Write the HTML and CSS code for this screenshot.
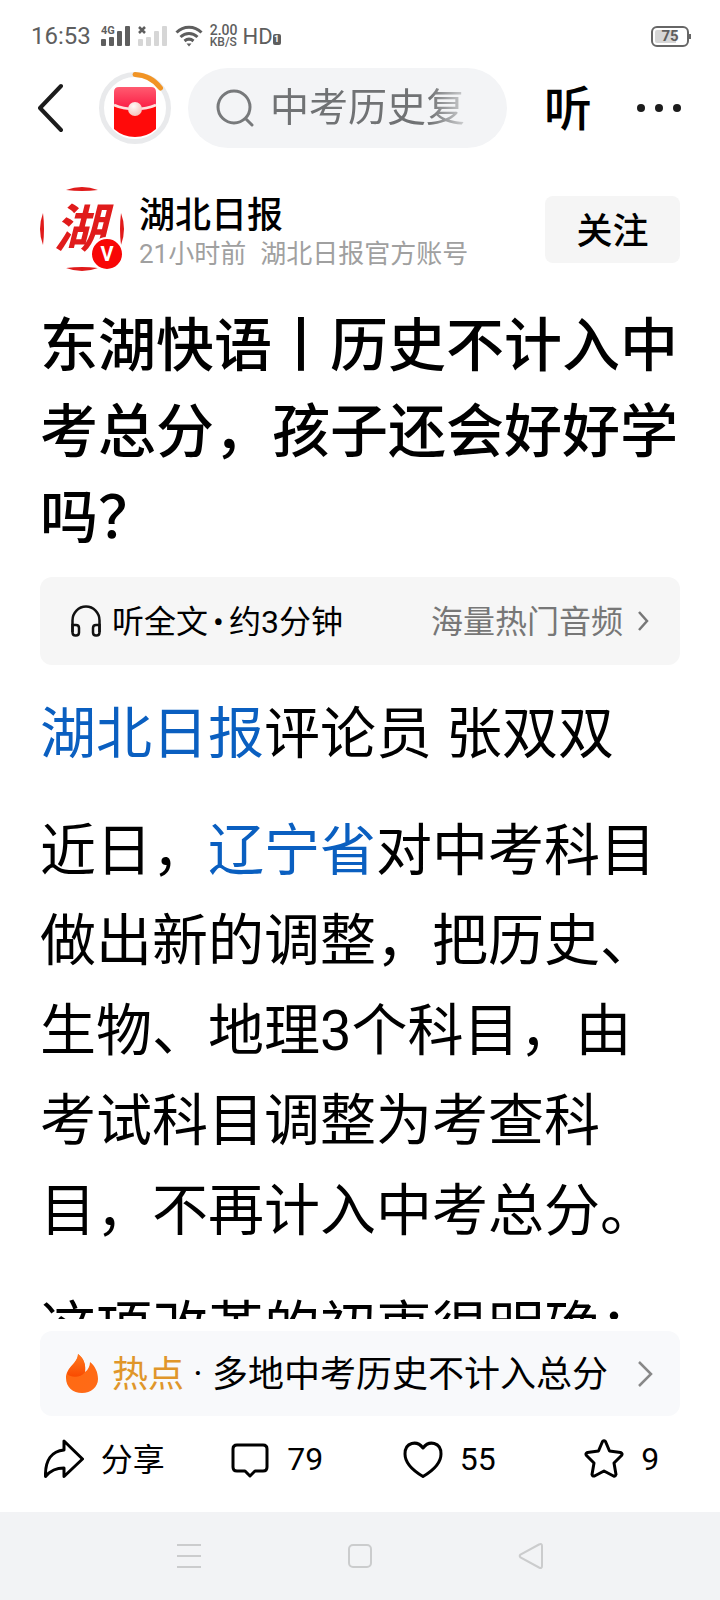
FILE: index.html
```html
<!DOCTYPE html>
<html lang="zh-CN">
<head>
    <meta charset="UTF-8">
    <meta name="viewport" content="width=device-width, initial-scale=1.0">
    <title>东湖快语丨历史不计入中考总分，孩子还会好好学吗？</title>
    <link rel="stylesheet" href="styles.css">
</head>
<body>
    <div class="status-bar">
        <span class="time">16:53</span>
        <svg class="signal" width="66" height="22" viewBox="0 0 66 22" fill="#5e5e5e">
            <text x="0" y="9" class="net">4G</text>
            <rect x="0" y="14" width="5" height="7" rx="1"/>
            <rect x="8" y="12" width="5" height="9" rx="1"/>
            <rect x="16" y="6" width="5" height="15" rx="1"/>
            <rect x="24" y="1" width="5" height="20" rx="1"/>
            <g fill="#d6d6d6">
                <rect x="37" y="14" width="5" height="7" rx="1"/>
                <rect x="45" y="12" width="5" height="9" rx="1"/>
                <rect x="53" y="6" width="5" height="15" rx="1"/>
                <rect x="61" y="1" width="5" height="20" rx="1"/>
            </g>
            <path d="M38 2l6 6M44 2l-6 6" stroke="#5e5e5e" stroke-width="2.5"/>
        </svg>
        <svg class="wifi" width="28" height="22" viewBox="0 0 28 22" fill="none" stroke="#5e5e5e" stroke-width="3">
            <path d="M1.500 7.500C8.500 .5 19.500 .5 26.500 7.500M5.500 12c5-4.600 12-4.600 17 0M9.500 16c3-2.500 6-2.500 9 0"/>
            <path d="M11.500 18.500h5L14 21.500z" fill="#5e5e5e" stroke="none"/>
        </svg>
        <span class="speed"><b>2.00</b><span>KB/S</span></span>
        <span class="hd">HD</span>
        <span class="sim">1</span>
        <span class="battery">75</span>
    </div>

    <header class="top-bar">
        <button class="icon-button" aria-label="返回">
            <svg width="26" height="50" viewBox="0 0 26 50" fill="none" stroke="#1c1c1c" stroke-width="4" stroke-linecap="round" stroke-linejoin="round">
                <path d="M24 3L3 25l21 22"/>
            </svg>
        </button>
        <button class="icon-button packet" aria-label="红包">
            <svg width="72" height="72" viewBox="0 0 72 72">
                <defs>
                    <linearGradient id="packet-flap" x1="0" y1="0" x2="0" y2="1">
                        <stop offset="0" stop-color="#ff5b70"/>
                        <stop offset="1" stop-color="#fb1540"/>
                    </linearGradient>
                    <radialGradient id="packet-pearl" cx=".4" cy=".3" r=".8">
                        <stop offset="0" stop-color="#fffaf8"/>
                        <stop offset="1" stop-color="#f4bcb4"/>
                    </radialGradient>
                </defs>
                <circle cx="36" cy="36" r="33.5" fill="#fff" stroke="#e9eaec" stroke-width="5"/>
                <path d="M36 2.500A33.500 33.500 0 0 1 61.500 16" fill="none" stroke="#f19425" stroke-width="5" stroke-linecap="round"/>
                <path d="M15 33h42v24q-9 8-21 8t-21-8z" fill="#ff0a0a"/>
                <path d="M15 20q0-5 5-5h32q5 0 5 5v14q-9 5-21 5t-21-5z" fill="url(#packet-flap)"/>
                <path d="M15 33q9 4 21 4t21-4" fill="none" stroke="#ffe0dc" stroke-width="3"/>
                <circle cx="36" cy="37" r="7" fill="url(#packet-pearl)"/>
            </svg>
        </button>
        <label class="search">
            <svg width="38" height="38" viewBox="0 0 38 38" fill="none" stroke="#77797b" stroke-width="3" stroke-linecap="round">
                <circle cx="18" cy="18" r="16"/>
                <path d="M30 30l6 6"/>
            </svg>
            <input type="text" placeholder="中考历史复" aria-label="搜索">
        </label>
        <button class="icon-button listen">听</button>
        <button class="icon-button" aria-label="更多">
            <svg width="46" height="10" viewBox="0 0 46 10" fill="#1c1c1c">
                <circle cx="5" cy="5" r="4"/>
                <circle cx="23" cy="5" r="4"/>
                <circle cx="41" cy="5" r="4"/>
            </svg>
        </button>
    </header>

    <main class="article">
        <div class="author">
            <div class="avatar">
                <svg width="84" height="84" viewBox="0 0 84 84" fill="#e01b1b">
                    <path d="M26 3Q42-3 58 3Q42 5 26 3zM26 81Q42 87 58 81Q42 79 26 81zM3 26Q-3 42 3 58Q5 42 3 26zM81 26Q87 42 81 58Q79 42 81 26z"/>
                    <text x="14" y="60" class="brand">湖</text>
                </svg>
                <span class="badge">V</span>
            </div>
            <div class="author-info">
                <a href="#" class="author-name">湖北日报</a>
                <div class="author-meta"><span>21小时前</span><span>湖北日报官方账号</span></div>
            </div>
            <button class="follow">关注</button>
        </div>

        <h1>东湖快语丨历史不计入中考总分，孩子还会好好学吗？</h1>

        <div class="audio-bar">
            <svg width="30" height="32" viewBox="0 0 30 32" fill="none" stroke="#111" stroke-width="2.5">
                <path d="M1.500 27V15.500a13.500 14 0 0 1 27 0V27"/>
                <path d="M1.500 20h3.500q3 0 3 3v4.500q0 3-3 3h-.5q-3 0-3-3zM28.500 20H25q-3 0-3 3v4.500q0 3 3 3h.5q3 0 3-3z"/>
            </svg>
            <span class="audio-title">听全文<span class="dot">•</span>约3分钟</span>
            <a href="#" class="audio-more"><span>海量热门音频</span>
                <svg width="12" height="20" viewBox="0 0 12 20" fill="none" stroke="#777" stroke-width="2.5">
                    <path d="M2 1l8 9-8 9"/>
                </svg>
            </a>
        </div>

        <p><a href="#">湖北日报</a>评论员 张双双</p>
        <p>近日，<a href="#">辽宁省</a>对中考科目做出新的调整，把历史、生物、地理3个科目，由考试科目调整为考查科目，不再计入中考总分。</p>
        <p>这项改革的初衷很明确：</p>
    </main>

    <footer class="footer">
        <a href="#" class="hot-bar">
            <svg width="32" height="40" viewBox="0 0 32 40">
                <defs>
                    <linearGradient id="flame" x1="0" y1="0" x2="1" y2="1">
                        <stop offset="0" stop-color="#ff6a10"/>
                        <stop offset="1" stop-color="#ff6a18"/>
                    </linearGradient>
                    <linearGradient id="flame-tip" x1="0" y1="0" x2="0" y2="1">
                        <stop offset="0" stop-color="#ff7a20"/>
                        <stop offset="1" stop-color="#f94a00"/>
                    </linearGradient>
                </defs>
                <path d="M12 0c0 9-12 13-12 24 0 9 7 15 16 15s16-6 16-14c0-7-3-13-8-17 0 4-2 8-5 10C20 11 18 4 12 0z" fill="url(#flame)"/>
                <path d="M1 20c4 4 14 4 18-2 1-7-1-13-7-18 0 9-9 12-11 20z" fill="url(#flame-tip)"/>
            </svg>
            <span class="hot-label">热点</span>
            <span class="hot-dot">·</span>
            <span class="hot-text">多地中考历史不计入总分</span>
            <svg class="arrow" width="15" height="26" viewBox="0 0 15 26" fill="none" stroke="#888" stroke-width="2.5">
                <path d="M1 1l12 12L1 25"/>
            </svg>
        </a>
        <div class="actions">
            <button class="action share">
                <svg width="40" height="40" viewBox="0 0 40 40">
                    <path d="M20 2v9C8 12 1 21 1.500 37.500 7 31 12 29 20 29v8.500L38.500 20z"/>
                </svg>
                <span>分享</span>
            </button>
            <button class="action">
                <svg width="40" height="40" viewBox="0 0 40 40">
                    <path d="M7 6h26q4 0 4 4v18q0 4-4 4h-8l-5 5-5-5H7q-4 0-4-4V10q0-4 4-4z"/>
                </svg>
                <span>79</span>
            </button>
            <button class="action">
                <svg width="40" height="40" viewBox="0 0 40 40">
                    <path d="M20 37.500C9 31 2 24 2 15 2 3 14 1 20 9 26 1 38 3 38 15c0 9-7 16-18 22.500z"/>
                </svg>
                <span>55</span>
            </button>
            <button class="action">
                <svg width="40" height="40" viewBox="0 0 40 40">
                    <path d="M18.500 2.500q1.500-1.500 3 0l4 9.500 11 1.500q2.500 1 1 3L30 24l2 11.500q-.5 2-2.500 1.500L20 32l-9.500 5Q8.500 37.500 8 35.500L10 24l-7.500-7.500q-1.500-2 1-3l11-1.500z"/>
                </svg>
                <span>9</span>
            </button>
        </div>
    </footer>

    <nav class="nav-bar">
        <button class="icon-button" aria-label="最近任务">
            <svg width="26" height="26" viewBox="0 0 26 26"><path d="M1 2h24M1 13h24M1 24h24"/></svg>
        </button>
        <button class="icon-button" aria-label="主屏幕">
            <svg width="26" height="26" viewBox="0 0 26 26"><rect x="2" y="2" width="22" height="22" rx="4"/></svg>
        </button>
        <button class="icon-button" aria-label="后退">
            <svg width="26" height="26" viewBox="0 0 26 26"><path d="M21 1.500q3-1.500 3 1.500v20q0 3-3 1.500L2.500 14.500q-1.500-1.500 0-3z"/></svg>
        </button>
    </nav>
</body>
</html>
```
FILE: styles.css
```css
* {
    box-sizing: border-box;
}
body {
    margin: 0;
    height: 100vh;
    display: flex;
    flex-direction: column;
    background-color: #fff;
    color: #000;
    font-family: Roboto, "Noto Sans CJK SC", sans-serif;
}
a {
    color: inherit;
    text-decoration: none;
}
button {
    font-family: inherit;
    color: inherit;
    border: none;
    padding: 0;
    background: none;
    cursor: pointer;
}
svg {
    display: block;
    flex-shrink: 0;
}

/* status bar */
.status-bar {
    display: flex;
    align-items: center;
    flex-shrink: 0;
    height: 68px;
    padding: 4px 31px 0;
    color: #5e5e5e;
}
.time {
    font-size: 24px;
}
.signal {
    margin-left: 10px;
}
.net {
    font-size: 11px;
    font-weight: 700;
}
.wifi {
    margin-left: 8px;
}
.speed {
    display: flex;
    flex-direction: column;
    margin-left: 7px;
    font-size: 12px;
    font-weight: 500;
    line-height: 12px;
}
.speed b {
    font-size: 14px;
    font-weight: 500;
}
.hd {
    margin-left: 5px;
    font-size: 22px;
}
.sim {
    margin-top: 7px;
    width: 8px;
    border-radius: 2px;
    background-color: #5e5e5e;
    color: #fff;
    font-size: 9px;
    font-weight: 700;
    line-height: 11px;
    text-align: center;
}
.battery {
    position: relative;
    margin-left: auto;
    width: 38px;
    height: 21px;
    border: 2px solid #666;
    border-radius: 6px;
    background: linear-gradient(90deg, #d6d6d6 70%, #fff 70%) content-box;
    padding: 2px;
    font-size: 15px;
    font-weight: 700;
    line-height: 13px;
    text-align: center;
}
.battery::after {
    content: "";
    position: absolute;
    right: -4px;
    top: 6px;
    width: 2px;
    height: 5px;
    background-color: #666;
}

/* top bar */
.top-bar {
    display: flex;
    align-items: center;
    flex-shrink: 0;
    padding: 0 38px 0 37px;
}
.packet {
    margin: 0 17px 0 36px;
}
.search {
    display: flex;
    align-items: center;
    flex: 1;
    min-width: 0;
    height: 80px;
    padding: 0 38px 0 28px;
    gap: 16px;
    border-radius: 40px;
    background-color: #f3f4f6;
}
.search input {
    flex: 1;
    min-width: 0;
    padding: 0;
    border: none;
    outline: none;
    background: none;
    font-family: inherit;
    font-size: 39px;
    -webkit-mask-image: linear-gradient(90deg, #000 80%, transparent 105%);
    mask-image: linear-gradient(90deg, #000 80%, transparent 105%);
}
.search input::placeholder {
    color: #707274;
}
.listen {
    margin: 0 44px 0 37px;
    padding-top: 4px;
    font-size: 48px;
    font-weight: 500;
    line-height: 68px;
}

/* article */
.article {
    flex: 1;
    min-height: 0;
    overflow: hidden;
    padding: 39px 40px 0;
}
.author {
    display: flex;
    align-items: center;
}
.avatar {
    position: relative;
    margin-right: 15px;
}
.brand {
    font-size: 52px;
    font-weight: 700;
    font-style: italic;
}
.badge {
    position: absolute;
    right: 0;
    bottom: 0;
    width: 34px;
    height: 34px;
    border: 2px solid #fff;
    border-radius: 50%;
    background-color: #f80606;
    color: #fff;
    font-size: 20px;
    font-weight: 700;
    line-height: 30px;
    text-align: center;
}
.author-info {
    flex: 1;
    padding-top: 8px;
}
.author-name {
    display: block;
    font-size: 36px;
    font-weight: 500;
    line-height: 42px;
}
.author-meta {
    display: flex;
    gap: 14px;
    color: #a0a0a0;
    font-size: 26px;
    line-height: 34px;
}
.follow {
    width: 135px;
    height: 67px;
    padding-bottom: 2px;
    border-radius: 8px;
    background-color: #f5f5f5;
    font-size: 36px;
    font-weight: 500;
}
h1 {
    margin: 0;
    padding: 32px 0 16px;
    font-size: 58px;
    font-weight: 500;
    line-height: 86px;
}
.audio-bar {
    display: flex;
    align-items: center;
    height: 88px;
    margin-bottom: 24px;
    padding: 0 31px;
    border-radius: 12px;
    background-color: #f6f6f6;
    font-size: 32px;
}
.audio-title {
    margin-left: 11px;
    padding-bottom: 5px;
}
.dot {
    display: inline-block;
    width: 21px;
    text-align: center;
}
.audio-more {
    display: flex;
    align-items: center;
    gap: 14px;
    margin-left: auto;
    color: #777;
}
.audio-more span {
    padding-bottom: 5px;
}
.article p {
    margin: 0 0 27px;
    font-size: 56px;
    line-height: 90px;
}
.article p a {
    color: #0a5fc0;
}

/* footer */
.footer {
    flex-shrink: 0;
    padding-top: 12px;
}
.hot-bar {
    display: flex;
    align-items: center;
    height: 85px;
    margin: 0 40px;
    padding: 0 27px 0 26px;
    border-radius: 12px;
    background-color: #f8f9fb;
    font-size: 36px;
}
.hot-label,
.hot-text {
    padding-bottom: 5px;
}
.hot-label {
    margin-left: 14px;
    color: #e0962a;
}
.hot-dot {
    width: 28px;
    text-align: center;
}
.arrow {
    margin-left: auto;
}
.actions {
    display: flex;
    height: 96px;
    padding: 0 12px 10px 18px;
}
.action {
    display: flex;
    flex: 1;
    align-items: center;
    justify-content: center;
    gap: 17px;
    font-size: 32px;
}
.share span {
    padding-bottom: 5px;
}
.action svg {
    fill: none;
    stroke: #000;
    stroke-width: 3;
    stroke-linejoin: round;
}

/* navigation bar */
.nav-bar {
    display: flex;
    align-items: center;
    justify-content: center;
    gap: 145px;
    flex-shrink: 0;
    height: 88px;
    background-color: #f2f3f5;
}
.nav-bar svg {
    fill: none;
    stroke: #cbcccd;
    stroke-width: 2;
}
```
